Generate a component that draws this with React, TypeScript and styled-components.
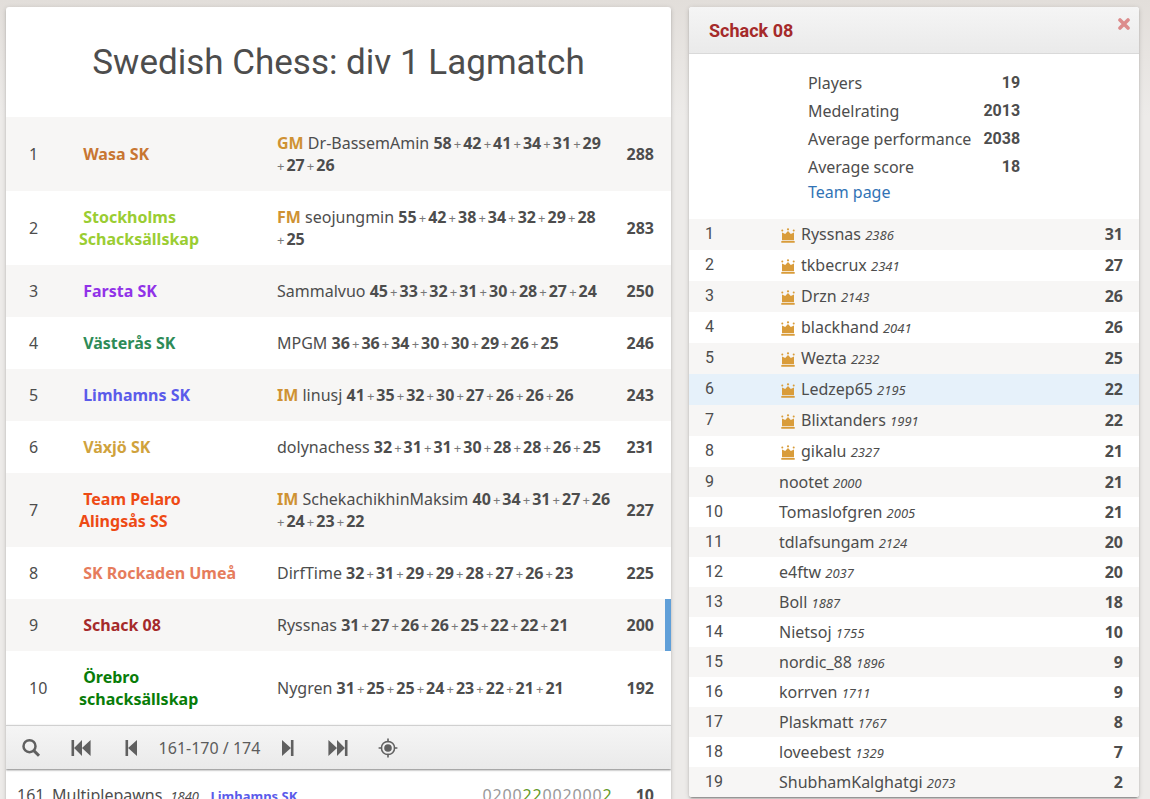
import React from 'react';
import styled, { createGlobalStyle } from 'styled-components';

const GlobalStyle = createGlobalStyle`
  *, *::before, *::after { box-sizing: border-box; }
  html { scrollbar-width: none; }
  body {
    margin: 0;
    color: #4d4d4d;
    background: linear-gradient(to bottom, #e2deda, #edebe9 116px) #edebe9 no-repeat;
    font: 16px/22px 'Noto Sans', sans-serif;
  }
  a { color: inherit; text-decoration: none; }
  table { border-collapse: collapse; border-spacing: 0; }
  td, th { padding: 0; text-align: left; }
`;

const Page = styled.div`
  display: grid;
  grid-template-columns: minmax(0, 1fr) 450px;
  align-items: start;
  gap: 18px;
  padding: 7px 11px 0 6px;
`;

const Box = styled.section`
  background: #fff;
  border-radius: 3px;
  overflow: hidden;
  box-shadow: 0 2px 2px rgba(0, 0, 0, 0.14), 0 3px 1px -2px rgba(0, 0, 0, 0.2), 0 1px 5px rgba(0, 0, 0, 0.16);
`;

const Title = styled.h1`
  margin: 0;
  padding: 34px 20px 32px;
  font: 400 35px/44px Roboto, sans-serif;
  text-align: center;
`;

const Standing = styled.table`
  width: 100%;
  table-layout: fixed;
`;

const StandingRow = styled.tr<{ $mine?: boolean }>`
  &:nth-child(odd) { background: #f7f6f5; }
  td { padding: 15px 0; }
  td:last-child { box-shadow: ${p => (p.$mine ? 'inset -6px 0 0 #609fd8' : 'none')}; }
  && td:nth-child(1) { padding-left: 23px; }
  && td:nth-child(2) { padding-left: 17px; padding-right: 22px; }
  && td:nth-child(3) { padding-left: 16px; }
  && td:nth-child(4) { padding-right: 17px; text-align: right; font-weight: 700; }
`;

const TeamLink = styled.a<{ $color: string }>`
  color: ${p => p.$color};
  font-weight: 700;
  white-space: pre-wrap;
`;

const PlayerTitle = styled.span`
  color: #cf9233;
  font-weight: 700;
`;

const Scores = styled.span`
  font-size: 8px;
  line-height: 1;
  b { font-size: 16px; }
`;

const Plus = styled.span`
  margin-right: 2px;
  color: #777;
  font-size: 13px;
`;

const Pager = styled.nav`
  position: relative;
  display: flex;
  align-items: center;
  height: 44px;
  border-top: 1px solid #d0d0d0;
  background: linear-gradient(to bottom, #f5f5f5, #eaeaea);
  box-shadow: 0 1px 2px rgba(0, 0, 0, 0.5);
`;

const PagerButton = styled.button`
  display: flex;
  align-items: center;
  justify-content: center;
  width: 50px;
  height: 43px;
  padding: 0;
  border: 0;
  background: none;
  color: #606060;
  svg { fill: currentColor; }
`;

const PageRange = styled.span`
  width: 107px;
  color: #5c5c5c;
  text-align: center;
  white-space: nowrap;
`;

const PlayerTable = styled.table`
  width: 100%;
  td { padding: 15px 0; white-space: nowrap; }
  td:nth-child(1) { width: 46px; padding-left: 11px; }
  td:nth-child(3) { text-align: right; }
  && td:nth-child(4) { width: 59px; padding-right: 17px; text-align: right; font-weight: 700; }
`;

const Rating = styled.em`
  font-size: 13px;
  line-height: 1;
`;

const PlayerRating = styled(Rating)`
  margin: 0 8px;
`;

const SmallTeam = styled(TeamLink)`
  font-size: 13px;
  line-height: 1;
`;

const Digit = styled.span<{ $win: boolean }>`
  display: inline-block;
  width: 10px;
  text-align: center;
  color: ${p => (p.$win ? '#629924' : '#999')};
`;

const InfoHead = styled.header`
  display: flex;
  align-items: flex-start;
  justify-content: space-between;
  padding: 11px 8px 9px 20px;
  border-bottom: 1px solid #d9d9d9;
  background: linear-gradient(to bottom, #f5f5f5, #eaeaea);
`;

const InfoTitle = styled.h2`
  margin: 0;
  color: #a52a2a;
  font: 700 18px/26px Roboto, sans-serif;
`;

const Close = styled.button`
  display: flex;
  padding: 0;
  border: 0;
  background: none;
  color: #dc8c8c;
`;

const Stats = styled.div`
  width: fit-content;
  margin: 0 auto;
  padding: 15px 0 16px;
  th { padding: 3px 0; font-weight: 400; }
  td { padding: 3px 0 3px 12px; font-family: Roboto, sans-serif; font-weight: 700; text-align: right; }
`;

const PageLink = styled.a`
  display: block;
  color: #3173b5;
`;

const Members = styled.table`
  width: 100%;
`;

const MemberRow = styled.tr<{ $leader: boolean; $me: boolean }>`
  height: ${p => (p.$leader ? 31 : 30)}px;
  background: ${p => (p.$me ? '#e6f1fa' : 'transparent')};
  &:nth-child(odd) { background: #f7f6f5; }
  th, td {
    padding-top: 4px;
    vertical-align: top;
  }
  th {
    width: 90px;
    padding-left: 16px;
    font: 400 16px/22px Roboto, sans-serif;
  }
  td:last-child { padding-right: 16px; text-align: right; font-weight: 700; }
`;

const Crown = styled.svg`
  margin: 0 6px 0 2px;
  vertical-align: -3px;
  fill: #d99c3a;
`;

type Standing = { color: string; team: string; title?: string; lead: string; scores: number[]; total: number };

const standings: Standing[] = [
  { color: '#c87632', team: 'Wasa SK', title: 'GM', lead: 'Dr-BassemAmin', scores: [58, 42, 41, 34, 31, 29, 27, 26], total: 288 },
  { color: '#9acd32', team: 'Stockholms Schacksällskap', title: 'FM', lead: 'seojungmin', scores: [55, 42, 38, 34, 32, 29, 28, 25], total: 283 },
  { color: '#9132e8', team: 'Farsta SK', lead: 'Sammalvuo', scores: [45, 33, 32, 31, 30, 28, 27, 24], total: 250 },
  { color: '#2e8b57', team: 'Västerås SK', lead: 'MPGM', scores: [36, 36, 34, 30, 30, 29, 26, 25], total: 246 },
  { color: '#5b5bea', team: 'Limhamns SK', title: 'IM', lead: 'linusj', scores: [41, 35, 32, 30, 27, 26, 26, 26], total: 243 },
  { color: '#d0a23c', team: 'Växjö SK', lead: 'dolynachess', scores: [32, 31, 31, 30, 28, 28, 26, 25], total: 231 },
  { color: '#ee4a14', team: 'Team Pelaro Alingsås SS', title: 'IM', lead: 'SchekachikhinMaksim', scores: [40, 34, 31, 27, 26, 24, 23, 22], total: 227 },
  { color: '#e67c5c', team: 'SK Rockaden Umeå', lead: 'DirfTime', scores: [32, 31, 29, 29, 28, 27, 26, 23], total: 225 },
  { color: '#a52a2a', team: 'Schack 08', lead: 'Ryssnas', scores: [31, 27, 26, 26, 25, 22, 22, 21], total: 200 },
  { color: '#087c08', team: 'Örebro schacksällskap', lead: 'Nygren', scores: [31, 25, 25, 24, 23, 22, 21, 21], total: 192 },
];

const members: [string, number, number][] = [
  ['Ryssnas', 2386, 31], ['tkbecrux', 2341, 27], ['Drzn', 2143, 26], ['blackhand', 2041, 26],
  ['Wezta', 2232, 25], ['Ledzep65', 2195, 22], ['Blixtanders', 1991, 22], ['gikalu', 2327, 21],
  ['nootet', 2000, 21], ['Tomaslofgren', 2005, 21], ['tdlafsungam', 2124, 20], ['e4ftw', 2037, 20],
  ['Boll', 1887, 18], ['Nietsoj', 1755, 10], ['nordic_88', 1896, 9], ['korrven', 1711, 9],
  ['Plaskmatt', 1767, 8], ['loveebest', 1329, 7], ['ShubhamKalghatgi', 2073, 2],
];

const stats: [string, number][] = [
  ['Players', 19], ['Medelrating', 2013], ['Average performance', 2038], ['Average score', 18],
];

const LEADERS = 8;

const SearchIcon = () => (
  <svg width="20" height="20" viewBox="0 0 20 20">
    <circle cx="8.5" cy="8.2" r="6" style={{ fill: 'none' }} stroke="currentColor" strokeWidth="2.5" />
    <path d="M12.8 12.6l5.2 5.2" stroke="currentColor" strokeWidth="3" />
  </svg>
);

const FirstIcon = () => (
  <svg width="20" height="16" viewBox="0 0 20 16">
    <path d="M.5 0h2.6v16H.5zM11 0v16L3.1 8zM19.6 0v16L11 8z" />
  </svg>
);

const PrevIcon = () => (
  <svg width="12" height="16" viewBox="0 0 12 16">
    <path d="M.5 0h2.6v16H.5zM12 0v16L3.1 8z" />
  </svg>
);

const NextIcon = () => (
  <svg width="12" height="16" viewBox="0 0 12 16">
    <path d="M11.5 0H8.9v16h2.6zM0 0v16l8.9-8z" />
  </svg>
);

const LastIcon = () => (
  <svg width="20" height="16" viewBox="0 0 20 16">
    <path d="M19.5 0h-2.6v16h2.6zM9 0v16l7.9-8zM.4 0v16L9 8z" />
  </svg>
);

const TargetIcon = () => (
  <svg width="20" height="20" viewBox="0 0 20 20">
    <circle cx="10" cy="10" r="6.6" style={{ fill: 'none' }} stroke="currentColor" strokeWidth="1.5" />
    <circle cx="10" cy="10" r="3.8" />
    <path d="M10 .6v3.6M10 15.8v3.6M.6 10h3.6M15.8 10h3.6" stroke="currentColor" strokeWidth="1.6" />
  </svg>
);

const CrownIcon = () => (
  <Crown width="14" height="15" viewBox="0 0 14 15" aria-hidden="true">
    <path d="M.3 13h13.4v1.7H.3zM1 4.6L4.2 6 7 3l2.8 3L13 4.6v7.6H1z" />
    <circle cx="1.3" cy="2.4" r="1" />
    <circle cx="7" cy="1.3" r="1.1" />
    <circle cx="12.7" cy="2.4" r="1" />
  </Crown>
);

export default function App() {
  return (
    <>
      <GlobalStyle />
      <Page>
        <Box as="main">
          <Title>Swedish Chess: div 1 Lagmatch</Title>
          <Standing>
            <colgroup>
              <col width="56" />
              <col width="199" />
              <col />
              <col width="59" />
            </colgroup>
            <tbody>
              {standings.map((s, i) => (
                <StandingRow key={s.team} $mine={s.team === 'Schack 08'}>
                  <td>{i + 1}</td>
                  <td><TeamLink href="#team" $color={s.color}>{' ' + s.team}</TeamLink></td>
                  <td>
                    {s.title && <><PlayerTitle>{s.title}</PlayerTitle>{' '}</>}
                    {s.lead}{' '}
                    <Scores>
                      {s.scores.map((n, j) => (
                        <React.Fragment key={j}>
                          {j > 0 && <>{' '}<Plus>+</Plus></>}
                          <b>{n}</b>
                        </React.Fragment>
                      ))}
                    </Scores>
                  </td>
                  <td>{s.total}</td>
                </StandingRow>
              ))}
            </tbody>
          </Standing>
          <Pager aria-label="Pagination">
            <PagerButton aria-label="Search"><SearchIcon /></PagerButton>
            <PagerButton aria-label="First"><FirstIcon /></PagerButton>
            <PagerButton aria-label="Previous"><PrevIcon /></PagerButton>
            <PageRange>161-170 / 174</PageRange>
            <PagerButton aria-label="Next"><NextIcon /></PagerButton>
            <PagerButton aria-label="Last"><LastIcon /></PagerButton>
            <PagerButton aria-label="Find me"><TargetIcon /></PagerButton>
          </Pager>
          <PlayerTable>
            <tbody>
              <tr>
                <td>161</td>
                <td>
                  Multiplepawns<PlayerRating>1840</PlayerRating>
                  <SmallTeam href="#team" $color="#5b5bea"> Limhamns SK</SmallTeam>
                </td>
                <td>
                  {'0200220020002'.split('').map((d, i) => (
                    <Digit key={i} $win={i === 4 || i === 5 || i === 12}>{d}</Digit>
                  ))}
                </td>
                <td>10</td>
              </tr>
            </tbody>
          </PlayerTable>
        </Box>
        <Box as="aside">
          <InfoHead>
            <InfoTitle><a href="#team">Schack 08</a></InfoTitle>
            <Close aria-label="Close">
              <svg width="14" height="12" viewBox="0 0 14 12">
                <path d="M3 2l8 8M11 2l-8 8" fill="none" stroke="currentColor" strokeWidth="3.6" strokeLinecap="round" />
              </svg>
            </Close>
          </InfoHead>
          <Stats>
            <table>
              <tbody>
                {stats.map(([label, value]) => (
                  <tr key={label}>
                    <th scope="row">{label}</th>
                    <td>{value}</td>
                  </tr>
                ))}
              </tbody>
            </table>
            <PageLink href="#team">Team page</PageLink>
          </Stats>
          <Members>
            <tbody>
              {members.map(([name, rating, score], i) => (
                <MemberRow key={name} $leader={i < LEADERS} $me={name === 'Ledzep65'}>
                  <th scope="row">{i + 1}</th>
                  <td>
                    {i < LEADERS && <CrownIcon />}
                    {name} <Rating>{rating}</Rating>
                  </td>
                  <td>{score}</td>
                </MemberRow>
              ))}
            </tbody>
          </Members>
        </Box>
      </Page>
    </>
  );
}
